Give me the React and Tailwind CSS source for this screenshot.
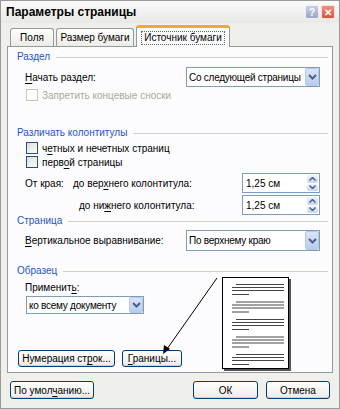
import React from 'react';

const U = ({ children }) => <span className="underline underline-offset-2">{children}</span>;

function Heading({ children }) {
  return (
    <div className="flex items-center h-[12px] pl-[1px] pr-[4px]">
      <span className="text-[#1d53c8] leading-none whitespace-nowrap">{children}</span>
      <div className="flex-1 ml-[6px] h-[1px] bg-[#d0d0bf]" />
    </div>
  );
}

function Chevron() {
  return (
    <svg width="9" height="6" viewBox="0 0 9 6">
      <path d="M1 1 L4.5 4.5 L8 1" stroke="#4d6185" strokeWidth="2" fill="none" />
    </svg>
  );
}

function Select({ value, className }) {
  return (
    <div className={`flex items-center bg-white border border-[#7f9db9] ${className}`}>
      <span className="flex-1 pl-[2px] whitespace-nowrap overflow-hidden tracking-[-0.25px]">{value}</span>
      <div className="w-[14px] h-full flex items-center justify-center bg-gradient-to-b from-[#dbe4f8] to-[#b9cbf1] border border-[#bac8e8] rounded-[2px]">
        <Chevron />
      </div>
    </div>
  );
}

function Spin({ value }) {
  return (
    <div className="flex items-center w-[78px] h-[20px] bg-white border border-[#7f9db9]">
      <span className="flex-1 pl-[3px]">{value}</span>
      <div className="w-[13px] h-full flex flex-col p-[1px] gap-[1px]">
        <div className="flex-1 flex items-center justify-center bg-gradient-to-b from-[#eef2fc] to-[#c7d5f3] rounded-[2px]">
          <svg width="7" height="4" viewBox="0 0 7 4"><path d="M0.5 3.5 L3.5 0.5 L6.5 3.5" stroke="#4d6185" strokeWidth="1.5" fill="none" /></svg>
        </div>
        <div className="flex-1 flex items-center justify-center bg-gradient-to-b from-[#eef2fc] to-[#c7d5f3] rounded-[2px]">
          <svg width="7" height="4" viewBox="0 0 7 4"><path d="M0.5 0.5 L3.5 3.5 L6.5 0.5" stroke="#4d6185" strokeWidth="1.5" fill="none" /></svg>
        </div>
      </div>
    </div>
  );
}

function Check({ disabled, children }) {
  return (
    <div className="flex items-center h-[14px] pl-[10px]">
      <div className={`w-[12px] h-[12px] border ${disabled ? 'border-[#c9c7ba] bg-white' : 'border-[#1c5180] bg-gradient-to-br from-[#dcdcd7] to-white'}`} />
      <span className={`ml-[4px] whitespace-nowrap ${disabled ? 'text-[#aca899]' : ''}`}>{children}</span>
    </div>
  );
}

function Button({ children, className }) {
  return (
    <div className={`flex items-center justify-center border border-[#003c74] rounded-[3px] bg-gradient-to-b from-white to-[#ecebe6] shadow-[inset_0_-1px_0_#d6d0c5] ${className}`}>
      <span className="whitespace-nowrap">{children}</span>
    </div>
  );
}

function PagePreview() {
  const groups = [0, 17.5, 35, 52.5, 70];
  return (
    <div className="w-[67px] h-[92px] bg-white border border-black shadow-[2px_2px_0_#555]">
      <svg width="65" height="90" viewBox="0 0 65 90">
        {groups.map((g) => (
          <g key={g} stroke="#444" strokeWidth="1">
            <line x1="13" x2="61" y1={6.5 + g} y2={6.5 + g} />
            <line x1="9" x2="61" y1={9.5 + g} y2={9.5 + g} />
            <line x1="9" x2="61" y1={12.5 + g} y2={12.5 + g} />
            <line x1="9" x2="26" y1={16.5 + g} y2={16.5 + g} />
          </g>
        ))}
      </svg>
    </div>
  );
}

export default function App() {
  return (
    <div
      className="relative w-[340px] h-[409px] flex flex-col bg-[#efefec] border border-[#9a9a9a] text-[10px] text-black overflow-hidden"
      style={{ fontFamily: '"Liberation Sans", Arial, sans-serif' }}
    >
      {/* title bar */}
      <div className="h-[22px] flex items-center pl-[5px] pr-[4px] bg-gradient-to-b from-[#fafafa] to-[#e8e8e6]">
        <span className="flex-1 font-bold text-[12px]">Параметры страницы</span>
        <div className="w-[14px] h-[14px] rounded-[2px] bg-gradient-to-b from-[#c8d0e6] to-[#9ba6c6] border border-[#eef] flex items-center justify-center text-white text-[10px] font-bold">?</div>
        <div className="ml-[2px] w-[14px] h-[14px] rounded-[2px] bg-gradient-to-b from-[#f28f7c] to-[#d6553f] border border-[#fdd] flex items-center justify-center text-white text-[10px] font-bold">✕</div>
      </div>

      {/* tabs */}
      <div className="flex items-end h-[23px] pl-[9px] gap-[2px]">
        <div className="h-[18px] w-[44px] flex items-center justify-center border border-b-0 border-[#919b9c] rounded-t-[3px] bg-gradient-to-b from-white to-[#ecebe6]">Поля</div>
        <div className="h-[18px] w-[78px] flex items-center justify-center border border-b-0 border-[#919b9c] rounded-t-[3px] bg-gradient-to-b from-white to-[#ecebe6] whitespace-nowrap">Размер бумаги</div>
        <div className="relative z-10 -mb-[1px] h-[22px] w-[94px] flex items-center justify-center border border-b-0 border-[#919b9c] border-t-[3px] border-t-[#f5a53a] rounded-t-[3px] bg-[#fcfcfe]">
          <span className="border border-dotted border-[#666] px-[2px] leading-[12px] whitespace-nowrap">Источник бумаги</span>
        </div>
      </div>

      {/* panel */}
      <div className="relative mx-[6px] h-[327px] bg-[#fcfcfe] border border-[#919b9c] pl-[8px] pt-[4px]">
        <Heading>Раздел</Heading>
        <div className="mt-[4px] flex items-center justify-between h-[20px] pr-[12px]">
          <span className="pl-[9px]"><U>Н</U>ачать раздел:</span>
          <Select value="Со следующей страницы" className="w-[134px] h-[20px]" />
        </div>
        <div className="mt-[1px]">
          <Check disabled>Запретить концевые сноски</Check>
        </div>

        <div className="mt-[25px]">
          <Heading>Различать колонтитулы</Heading>
        </div>
        <div className="mt-[2px]">
          <Check>ч<U>е</U>тных и нечетных страниц</Check>
          <Check>перв<U>о</U>й страницы</Check>
        </div>
        <div className="mt-[4px] flex items-center h-[20px] pr-[12px]">
          <span className="pl-[9px] w-[57px] whitespace-nowrap">От края:</span>
          <span className="flex-1 whitespace-nowrap">до вер<U>х</U>него колонтитула:</span>
          <Spin value="1,25 см" />
        </div>
        <div className="mt-[2px] flex items-center h-[20px] pr-[12px]">
          <span className="pl-[63px] flex-1 whitespace-nowrap">до ни<U>ж</U>него колонтитула:</span>
          <Spin value="1,25 см" />
        </div>

        <Heading>Страница</Heading>
        <div className="mt-[3px] flex items-center justify-between h-[21px] pr-[12px]">
          <span className="pl-[9px]"><U>В</U>ертикальное выравнивание:</span>
          <Select value="По верхнему краю" className="w-[134px] h-[21px]" />
        </div>

        <div className="mt-[14px]">
          <Heading>Образец</Heading>
        </div>
        <div className="flex">
          <div className="w-[206px] pl-[2px]">
            <div className="mt-[3px] h-[14px] flex items-center pl-[7px]">Применит<U>ь</U>:</div>
            <Select value="ко всему документу" className="ml-[8px] mt-[2px] w-[118px] h-[18px]" />
            <div className="mt-[36px] flex gap-[7px]">
              <Button className="w-[97px] h-[17px]">Нумерация ст<U>р</U>ок...</Button>
              <Button className="w-[60px] h-[17px]"><U>Г</U>раницы...</Button>
            </div>
          </div>
          <div>
            <PagePreview />
          </div>
        </div>
      </div>

      {/* bottom buttons */}
      <div className="mt-[8px] flex items-center pl-[9px] pr-[9px]">
        <Button className="w-[84px] h-[18px]">По умол<U>ч</U>анию...</Button>
        <div className="flex-1" />
        <Button className="w-[65px] h-[18px]">ОК</Button>
        <Button className="ml-[8px] w-[64px] h-[18px]">Отмена</Button>
      </div>

      {/* annotation arrow */}
      <svg className="absolute left-0 top-0 pointer-events-none" width="340" height="409">
        <line x1="216" y1="277" x2="166" y2="348" stroke="#000" strokeWidth="1" />
        <path d="M162 353 L163 344 L169 348 Z" fill="#000" />
      </svg>
    </div>
  );
}
